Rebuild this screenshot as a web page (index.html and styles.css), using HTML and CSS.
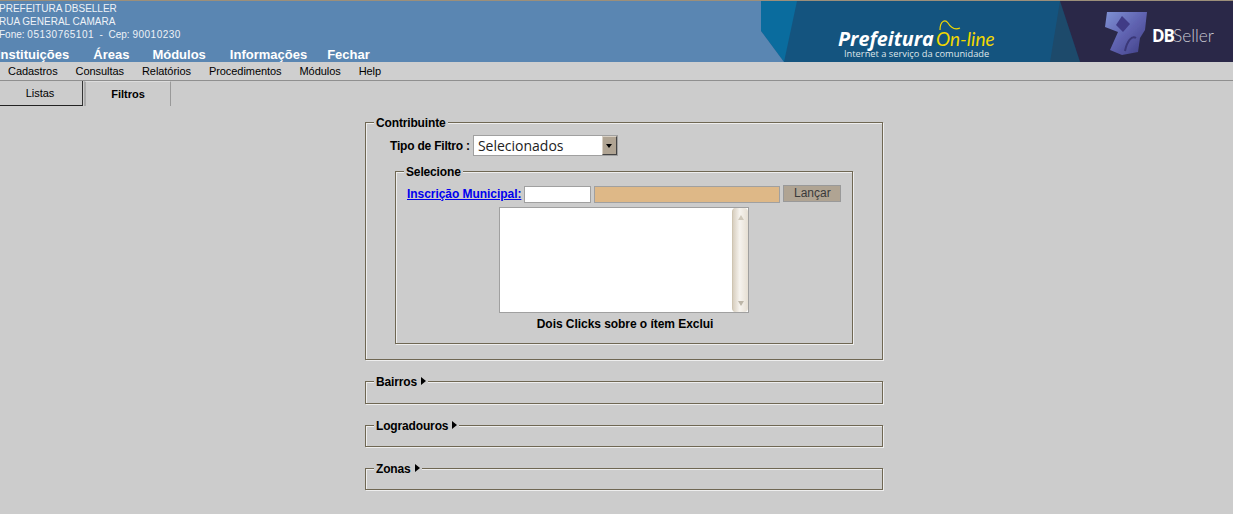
FILE: index.html
```html
<!DOCTYPE html>
<html lang="pt-BR">
<head>
    <meta charset="UTF-8">
    <title>Prefeitura On-line</title>
    <link rel="stylesheet" href="styles.css">
</head>
<body>
    <div class="topo">
        <div class="topo-info">
            <div class="endereco">
                <div>PREFEITURA DBSELLER</div>
                <div>RUA GENERAL CAMARA</div>
                <div>Fone: <span class="num">05130765101</span> &nbsp;- &nbsp;Cep: <span class="num">90010230</span></div>
            </div>
            <div class="menu-topo">
                <a>Instituições</a>
                <a>Áreas</a>
                <a>Módulos</a>
                <a>Informações</a>
                <a>Fechar</a>
            </div>
        </div>
        <svg class="banner" width="472" height="61" viewBox="0 0 472 61">
            <defs>
                <linearGradient id="logoCor" x1="0" y1="0" x2="1" y2="1">
                    <stop offset="0" stop-color="#7f92d4"/>
                    <stop offset="0.5" stop-color="#5f62b0"/>
                    <stop offset="1" stop-color="#3f3e84"/>
                </linearGradient>
                <filter id="logoBlur"><feGaussianBlur stdDeviation="0.7"/></filter>
            </defs>
            <rect width="472" height="61" fill="#14547f"/>
            <polygon points="0,0 36,0 23,61 0,30" fill="#0a6c9e"/>
            <polygon points="0,30 23,61 0,61" fill="#5a86b2"/>
            <polygon points="299,0 289,61 319,61" fill="#1d4a6b"/>
            <polygon points="299,0 472,0 472,61 319,61" fill="#2a2848"/>
            <text x="77" y="45" class="b-pref">Prefeitura</text>
            <text x="175" y="45" class="b-online">On-line</text>
            <path d="M179 29 C179 20 184 18 187 22 C190 27 194 29 199 27" fill="none" stroke="#f2d800" stroke-width="1.2"/>
            <text x="83" y="56" class="b-sub">Internet a serviço da comunidade</text>
            <g filter="url(#logoBlur)">
                <polygon points="346,11 386,11 384,29 379,37 377,51 361,54 349,49 357,31 344,26" fill="url(#logoCor)"/>
                <polygon points="361,15 369,23 362,31 355,24" fill="#3f3a86"/>
                <path d="M364 50 C366 40 371 34 375 37" fill="none" stroke="#3a3878" stroke-width="2"/>
            </g>
            <text x="391" y="41" class="b-db">DB</text>
            <text x="412" y="41" class="b-seller">Seller</text>
        </svg>
    </div>

    <div class="menu">
        <a>Cadastros</a>
        <a>Consultas</a>
        <a>Relatórios</a>
        <a>Procedimentos</a>
        <a>Módulos</a>
        <a>Help</a>
    </div>

    <div class="abas">
        <div class="aba aba-lista">Listas</div>
        <div class="aba aba-ativa">Filtros</div>
    </div>

    <div class="filtros">
        <fieldset class="grupo grupo-contribuinte">
            <legend>Contribuinte</legend>
            <div class="tipo-filtro">
                <label>Tipo de Filtro :</label>
                <div class="select">
                    <span class="select-valor">Selecionados</span>
                    <span class="select-seta"></span>
                </div>
            </div>
            <fieldset class="grupo grupo-selecione">
                <legend>Selecione</legend>
                <div class="linha-inscricao">
                    <a class="link" href="#">Inscrição Municipal:</a>
                    <input class="campo campo-cod" type="text">
                    <input class="campo campo-nome" type="text" readonly>
                    <button class="botao">Lançar</button>
                </div>
                <div class="lista">
                    <div class="scroll">
                        <span class="seta-cima"></span>
                        <span class="seta-baixo"></span>
                    </div>
                </div>
                <div class="dica">Dois Clicks sobre o ítem Exclui</div>
            </fieldset>
        </fieldset>

        <fieldset class="grupo grupo-fechado">
            <legend>Bairros<span class="seta"></span></legend>
        </fieldset>
        <fieldset class="grupo grupo-fechado">
            <legend>Logradouros<span class="seta"></span></legend>
        </fieldset>
        <fieldset class="grupo grupo-fechado">
            <legend>Zonas<span class="seta"></span></legend>
        </fieldset>
    </div>
</body>
</html>
```
FILE: styles.css
```css
* { box-sizing: border-box; }
body { margin: 0; height: 514px; overflow: hidden; background: #cccccc; font-family: "Liberation Sans", Arial, sans-serif; font-size: 12px; color: #000; }

.topo { display: flex; justify-content: space-between; height: 62px; background: #5a86b2; border-top: 1px solid #9c8f7a; overflow: hidden; }
.topo-info { margin-left: -1px; color: #fff; }
.endereco { font-size: 10px; line-height: 13px; padding-top: 1px; color: #eef2f7; }
.endereco .num { letter-spacing: 0.5px; }
.menu-topo { display: flex; margin-top: 6px; margin-left: -2px; font-size: 13px; font-weight: bold; line-height: 15px; }
.menu-topo a { margin-right: 24px; }
.menu-topo a:nth-child(2) { margin-right: 23px; }
.menu-topo a:nth-child(4) { margin-right: 20px; }
.banner { display: block; flex: none; }
.banner .b-pref { font-family: "Open Sans", sans-serif; font-size: 19.8px; font-weight: bold; font-style: italic; fill: #fff; }
.banner .b-online { font-family: "Lato", sans-serif; font-size: 19px; font-style: italic; fill: #f2d800; }
.banner .b-sub { font-family: "Open Sans", sans-serif; font-size: 9.3px; fill: #dfe6ea; }
.banner .b-db { font-family: "Open Sans", sans-serif; font-size: 17px; font-weight: bold; letter-spacing: -1px; fill: #fff; }
.banner .b-seller { font-family: "Lato", sans-serif; font-size: 17.3px; font-weight: 300; fill: #c9c9d2; }

.menu { display: flex; gap: 18px; height: 19px; padding-left: 8px; font-size: 11px; letter-spacing: -0.06px; line-height: 18px; border-bottom: 1px solid #8f8f8f; background: #cfcfcf; }

.abas { display: flex; height: 25px; }
.aba { font-size: 11px; text-align: center; }
.aba-lista { width: 83px; padding: 6px 2px 0 0; border-right: 1px solid #333; border-bottom: 1px solid #222; }
.aba-ativa { width: 87px; padding-top: 6px; margin-left: 1px; font-weight: bold; border-left: 2px solid #aaa; border-right: 1px solid #999; border-top: 1px solid #ddd; }

.filtros { margin-left: 365px; width: 518px; margin-top: 8px; }
.grupo { margin: 0; padding: 0; border: 1px solid #6f6753; box-shadow: inset 1px 1px 0 #eeeeee, 1px 1px 0 #eeeeee; }
.grupo legend { margin-left: 8px; padding: 2px 2px 0; background: #cccccc; font-size: 12px; font-weight: bold; letter-spacing: -0.15px; line-height: 14px; }

.grupo-contribuinte { height: 246px; }
.tipo-filtro { display: flex; align-items: center; margin-top: 5px; padding-left: 24px; }
.tipo-filtro label { font-weight: bold; letter-spacing: -0.2px; margin-right: 3px; }
.select { display: flex; justify-content: space-between; width: 145px; height: 21px; background: #fff; border: 1px solid #a0a0a0; }
.select-valor { font-family: "Open Sans", sans-serif; font-size: 14px; line-height: 19px; padding-left: 4px; color: #222; }
.select-seta { position: relative; width: 15px; background: #b0a493; border: 1px solid; border-color: #d8d0c4 #444 #444 #d8d0c4; }
.select-seta::after { content: ""; position: absolute; top: 7px; left: 3px; border: 3px solid transparent; border-top: 4px solid #000; }

.grupo-selecione { height: 181px; margin: 7px 29px 0 29px; }
.linha-inscricao { display: flex; align-items: flex-start; height: 19px; margin-top: 6px; padding-left: 11px; }
.link { margin: 2px 3px 0 0; font-weight: bold; letter-spacing: -0.05px; line-height: 14px; color: #0000ee; }
.campo { height: 17px; margin-top: 1px; padding: 0; border: 1px solid #a0a0a0; background: #fff; }
.campo-cod { width: 67px; margin-right: 3px; }
.campo-nome { width: 186px; margin-right: 3px; background: #deb887; }
.botao { width: 58px; height: 17px; padding: 0; border: 1px solid #999; background: #b0a493; color: #3a3a3a; font-family: "Liberation Sans", Arial, sans-serif; font-size: 12px; line-height: 15px; }

.lista { position: relative; width: 250px; height: 106px; margin: 3px 0 0 103px; background: #fff; border: 1px solid #a0a0a0; }
.scroll { position: absolute; top: 0; right: 0; bottom: 0; width: 16px; border-radius: 4px; border-left: 1px solid #cfc5b2; background: linear-gradient(to right, #d8cfc0, #f6f3ee 45%, #e6dfd3); }
.seta-cima, .seta-baixo { position: absolute; left: 5px; border: 3px solid transparent; }
.seta-cima { top: 7px; border-top: 0; border-bottom: 5px solid #cfc8ba; }
.seta-baixo { bottom: 6px; border-bottom: 0; border-top: 5px solid #bdb6a8; }
.dica { margin-top: 4px; margin-left: 2px; text-align: center; font-weight: bold; letter-spacing: -0.05px; line-height: 14px; }

.grupo-fechado { height: 30px; margin-top: 13px; }
.grupo-fechado:nth-child(2) { height: 31px; }
.seta { display: inline-block; margin-left: 4px; vertical-align: 1px; border: 4px solid transparent; border-left: 5px solid #000; border-right: 0; }
```
